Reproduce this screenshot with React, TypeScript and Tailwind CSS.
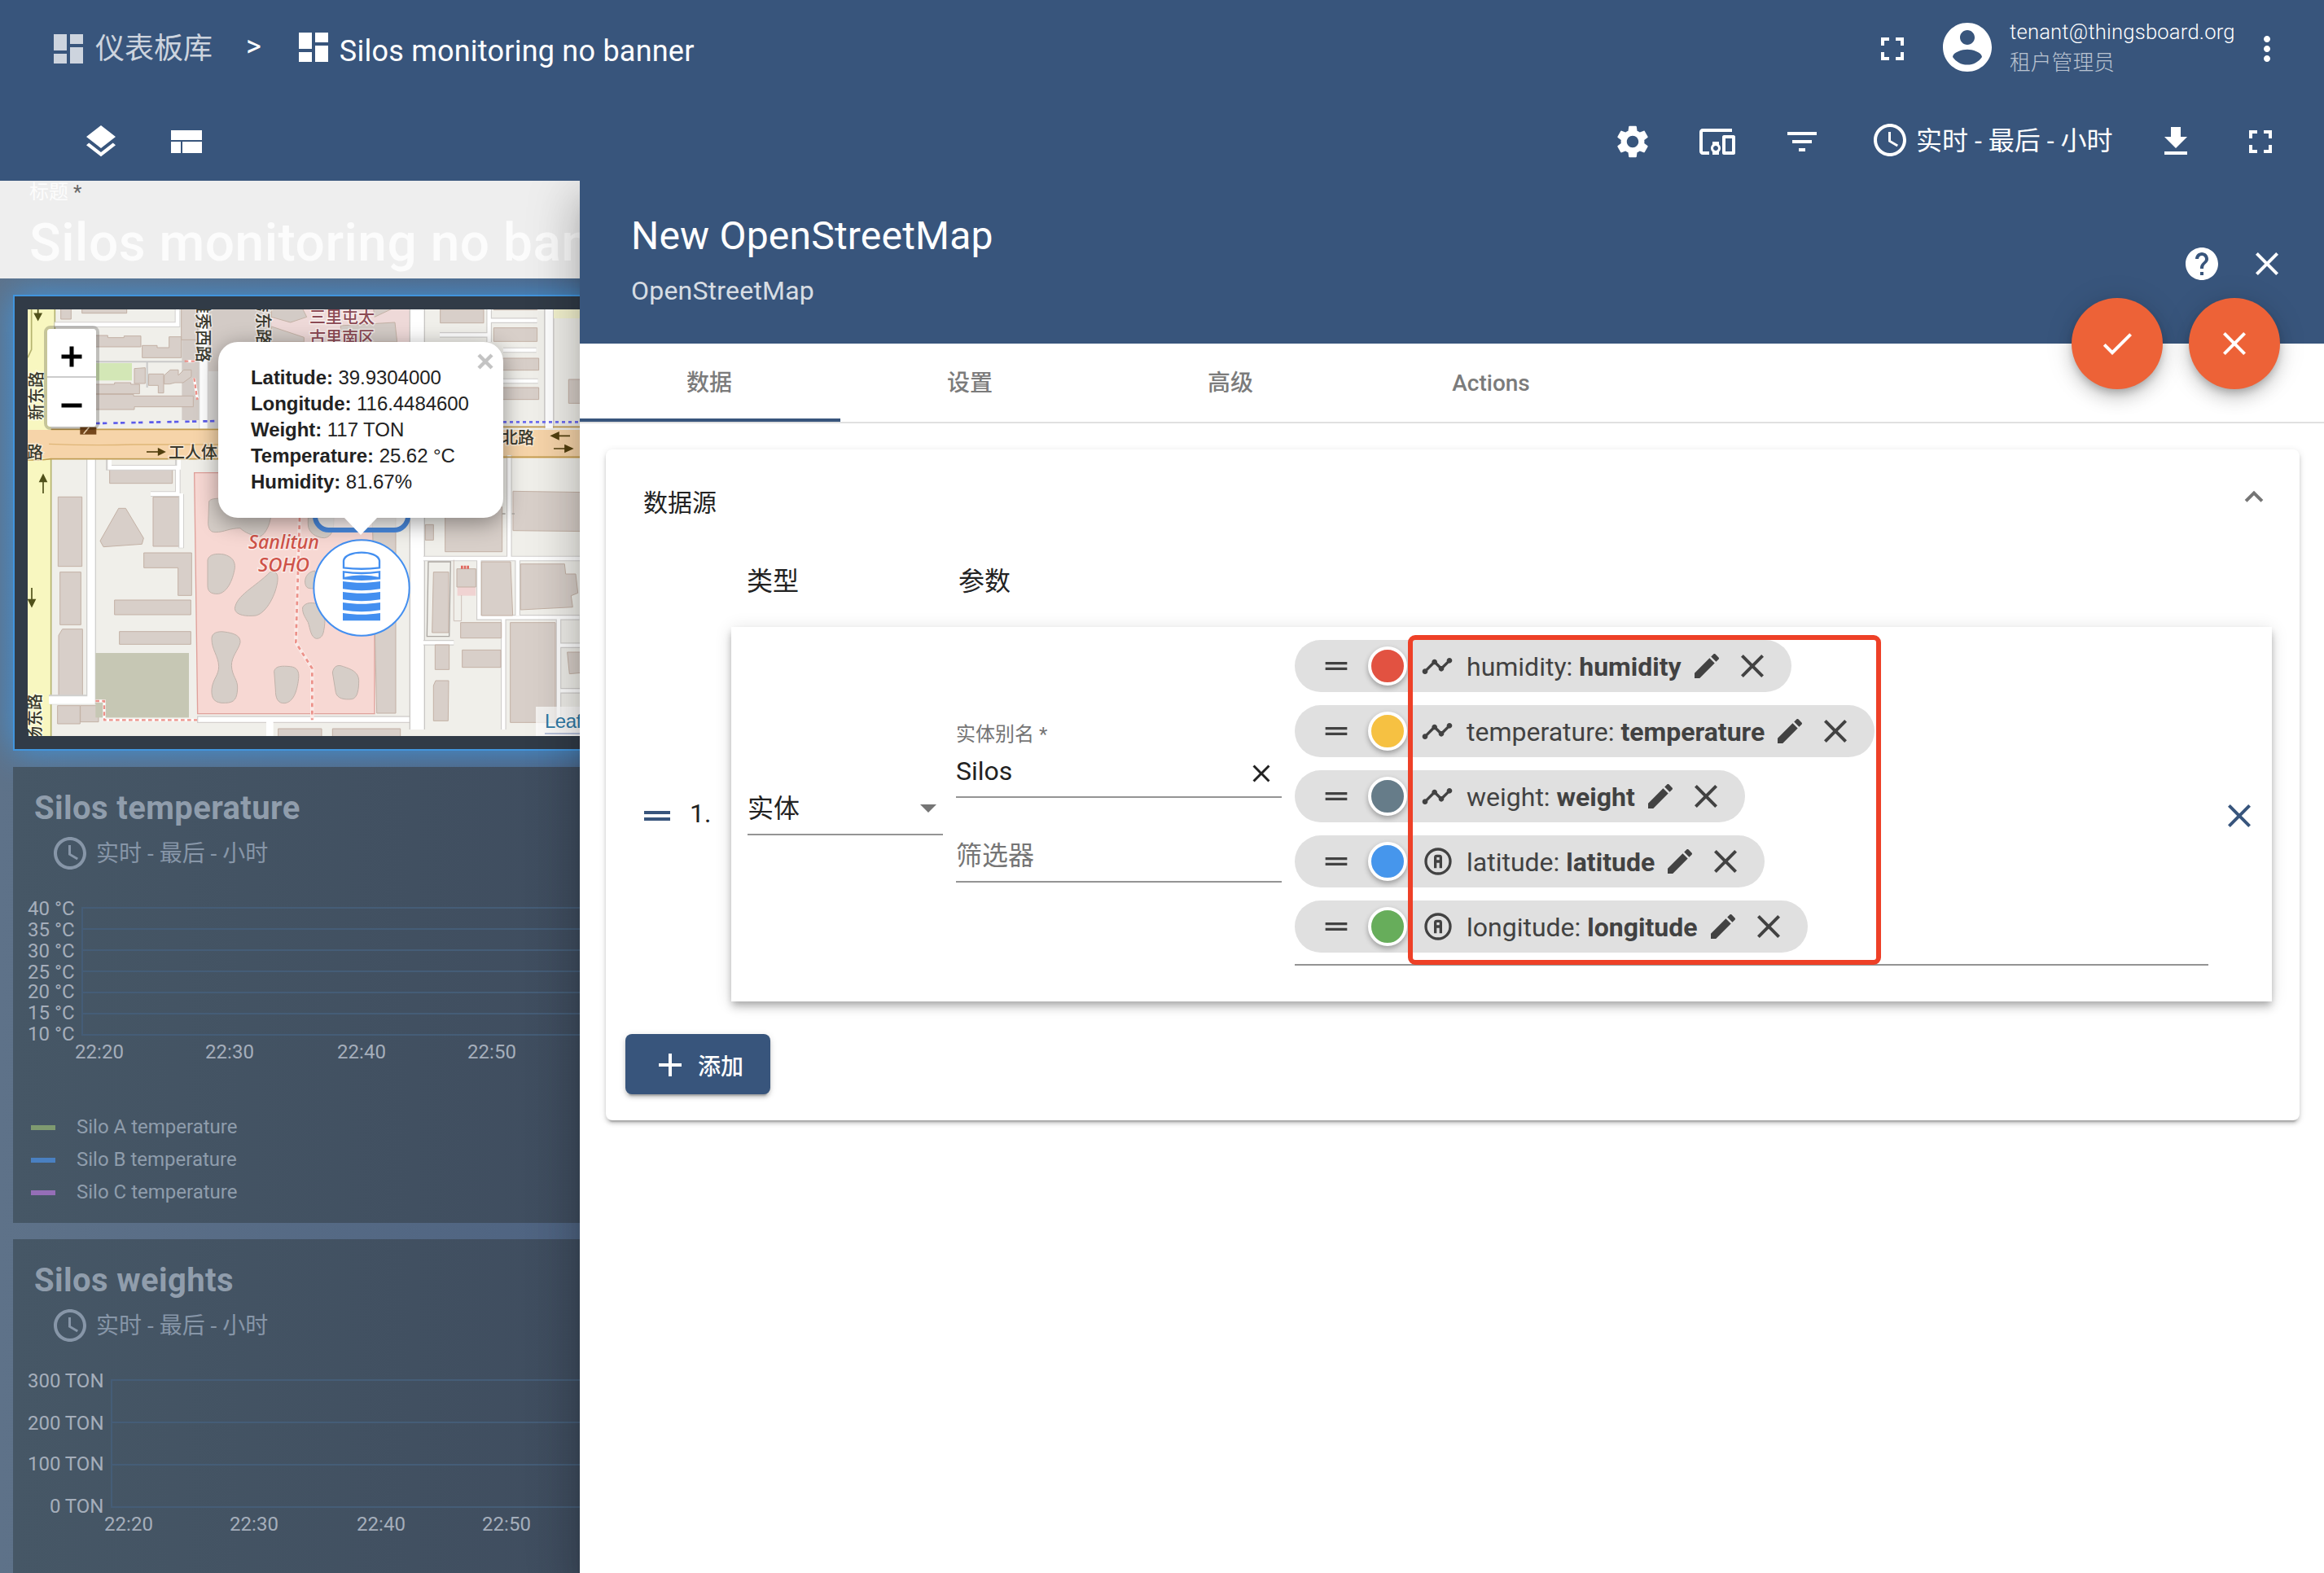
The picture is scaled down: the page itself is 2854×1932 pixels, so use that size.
import React from "react";

type IconProps = { d: string; className?: string };

function Icon({ d, className = "size-12" }: IconProps) {
  return (
    <svg viewBox="0 0 24 24" className={"shrink-0 fill-current " + className}>
      <path d={d} />
    </svg>
  );
}

const P = {
  dashboard: "M3 13h8V3H3v10zm0 8h8v-6H3v6zm10 0h8V11h-8v10zm0-18v6h8V3h-8z",
  fullscreen:
    "M7 14H5v5h5v-2H7v-3zm-2-4h2V7h3V5H5v5zm12 7h-3v2h5v-5h-2v3zM14 5v2h3v3h2V5h-5z",
  account:
    "M12 2C6.48 2 2 6.48 2 12s4.48 10 10 10 10-4.48 10-10S17.52 2 12 2zm0 3c1.66 0 3 1.34 3 3s-1.34 3-3 3-3-1.34-3-3 1.34-3 3-3zm0 14.2c-2.5 0-4.71-1.28-6-3.22.03-1.99 4-3.08 6-3.08 1.99 0 5.97 1.09 6 3.08-1.29 1.94-3.5 3.22-6 3.22z",
  more: "M12 8c1.1 0 2-.9 2-2s-.9-2-2-2-2 .9-2 2 .9 2 2 2zm0 2c-1.1 0-2 .9-2 2s.9 2 2 2 2-.9 2-2-.9-2-2-2zm0 6c-1.1 0-2 .9-2 2s.9 2 2 2 2-.9 2-2-.9-2-2-2z",
  layers:
    "M11.99 18.54l-7.37-5.73L3 14.07l9 7 9-7-1.63-1.27-7.38 5.74zM12 16l7.36-5.73L21 9l-9-7-9 7 1.63 1.27L12 16z",
  compact: "M3 19h6v-7H3v7zm7 0h12v-7H10v7zM3 5v6h19V5H3z",
  settings:
    "M19.14 12.94c.04-.3.06-.61.06-.94 0-.32-.02-.64-.07-.94l2.03-1.58c.18-.14.23-.41.12-.61l-1.92-3.32c-.12-.22-.37-.29-.59-.22l-2.39.96c-.5-.38-1.03-.7-1.62-.94l-.36-2.54c-.04-.24-.24-.41-.48-.41h-3.84c-.24 0-.43.17-.47.41l-.36 2.54c-.59.24-1.13.57-1.62.94l-2.39-.96c-.22-.08-.47 0-.59.22L2.74 8.87c-.12.21-.08.47.12.61l2.03 1.58c-.05.3-.09.63-.09.94s.02.64.07.94l-2.03 1.58c-.18.14-.23.41-.12.61l1.92 3.32c.12.22.37.29.59.22l2.39-.96c.5.38 1.03.7 1.62.94l.36 2.54c.05.24.24.41.48.41h3.84c.24 0 .44-.17.47-.41l.36-2.54c.59-.24 1.13-.56 1.62-.94l2.39.96c.22.08.47 0 .59-.22l1.92-3.32c.12-.22.07-.47-.12-.61l-2.01-1.58zM12 15.6c-1.98 0-3.6-1.62-3.6-3.6s1.62-3.6 3.6-3.6 3.6 1.62 3.6 3.6-1.62 3.6-3.6 3.6z",
  devices:
    "M3 6h18V4H3c-1.1 0-2 .9-2 2v12c0 1.1.9 2 2 2h4v-2H3V6zm10 6H9v1.78c-.61.55-1 1.33-1 2.22s.39 1.67 1 2.22V20h4v-1.78c.61-.55 1-1.34 1-2.22s-.39-1.67-1-2.22V12zm-2 5.5c-.83 0-1.5-.67-1.5-1.5s.67-1.5 1.5-1.5 1.5.67 1.5 1.5-.67 1.5-1.5 1.5zM22 8h-6c-.5 0-1 .5-1 1v10c0 .5.5 1 1 1h6c.5 0 1-.5 1-1V9c0-.5-.5-1-1-1zm-1 10h-4v-8h4v8z",
  filter: "M10 18h4v-2h-4v2zM3 6v2h18V6H3zm3 7h12v-2H6v2z",
  clock:
    "M11.99 2C6.47 2 2 6.48 2 12s4.47 10 9.99 10C17.52 22 22 17.52 22 12S17.52 2 11.99 2zM12 20c-4.42 0-8-3.58-8-8s3.58-8 8-8 8 3.58 8 8-3.58 8-8 8zm.5-13H11v6l5.25 3.15.75-1.23-4.5-2.67z",
  download: "M19 9h-4V3H9v6H5l7 7 7-7zM5 18v2h14v-2H5z",
  help: "M12 2C6.48 2 2 6.48 2 12s4.48 10 10 10 10-4.48 10-10S17.52 2 12 2zm1 17h-2v-2h2v2zm2.07-7.75l-.9.92C13.45 12.9 13 13.5 13 15h-2v-.5c0-1.1.45-2.1 1.17-2.83l1.24-1.26c.37-.36.59-.86.59-1.41 0-1.1-.9-2-2-2s-2 .9-2 2H8c0-2.21 1.79-4 4-4s4 1.79 4 4c0 .88-.36 1.68-.93 2.25z",
  close:
    "M19 6.41L17.59 5 12 10.59 6.41 5 5 6.41 10.59 12 5 17.59 6.41 19 12 13.41 17.59 19 19 17.59 13.41 12z",
  check: "M9 16.17L4.83 12l-1.42 1.41L9 19 21 7l-1.41-1.41z",
  drag: "M20 9H4v2h16V9zM4 15h16v-2H4v2z",
  add: "M19 13h-6v6h-2v-6H5v-2h6V5h2v6h6v2z",
  timeline:
    "M23 8c0 1.1-.9 2-2 2-.18 0-.35-.02-.51-.07l-3.56 3.55c.05.16.07.34.07.52 0 1.1-.9 2-2 2s-2-.9-2-2c0-.18.02-.36.07-.52l-2.55-2.55c-.16.05-.34.07-.52.07s-.36-.02-.52-.07l-4.55 4.56c.05.16.07.33.07.51 0 1.1-.9 2-2 2s-2-.9-2-2 .9-2 2-2c.18 0 .35.02.51.07l4.56-4.55C8.02 9.36 8 9.18 8 9c0-1.1.9-2 2-2s2 .9 2 2c0 .18-.02.36-.07.52l2.55 2.55c.16-.05.34-.07.52-.07s.36.02.52.07l3.55-3.56C19.02 8.35 19 8.18 19 8c0-1.1.9-2 2-2s2 .9 2 2z",
  attribute:
    "M11 7h2a2 2 0 0 1 2 2v8h-2v-4h-2v4H9V9a2 2 0 0 1 2-2m0 2v2h2V9h-2m1 11a8 8 0 0 0 8-8 8 8 0 0 0-8-8 8 8 0 0 0-8 8 8 8 0 0 0 8 8m0 2A10 10 0 0 1 2 12 10 10 0 0 1 12 2a10 10 0 0 1 10 10 10 10 0 0 1-10 10z",
  edit: "M3 17.25V21h3.75L17.81 9.94l-3.75-3.75L3 17.25zM20.71 7.04c.39-.39.39-1.02 0-1.41l-2.34-2.34c-.39-.39-1.02-.39-1.41 0l-1.83 1.83 3.75 3.75 1.83-1.83z",
};

function Header() {
  return (
    <header className="relative z-20 h-[222px] bg-[#38557c] text-white">
      <div className="flex h-[126px] items-center pb-1.5 pl-[60px] pr-[46px]">
        <div className="flex items-center gap-[9px] text-white/75">
          <Icon d={P.dashboard} />
          <span className="text-[36px] leading-none">仪表板库</span>
        </div>
        <span className="mb-1.5 ml-[41px] text-[36px] leading-none">&gt;</span>
        <div className="ml-[40px] flex items-center gap-2">
          <Icon d={P.dashboard} className="mb-1 size-12" />
          <span className="mt-[5px] text-[36px] leading-none tracking-[0.23px]">
            Silos monitoring no banner
          </span>
        </div>
        <div className="ml-auto flex items-center">
          <Icon d={P.fullscreen} />
          <Icon d={P.account} className="mb-1 ml-8 size-[72px]" />
          <div className="mb-1 ml-4 w-[292px] text-[25.6px] font-light leading-[38px] tracking-[0.008em]">
            <div>tenant@thingsboard.org</div>
            <div className="opacity-65">租户管理员</div>
          </div>
          <Icon d={P.more} />
        </div>
      </div>
      <div className="flex h-24 items-center pl-[100px] pr-[54px]">
        <Icon d={P.layers} />
        <Icon d={P.compact} className="ml-14 size-12" />
        <div className="ml-auto flex items-center">
          <Icon d={P.settings} />
          <Icon d={P.devices} className="ml-14 size-12" />
          <Icon d={P.filter} className="ml-14 size-12" />
          <Icon d={P.clock} className="mb-1 ml-[60px] size-12" />
          <span className="mb-0.5 ml-2 w-[295px] text-[32px] leading-none">实时 - 最后 - 小时</span>
          <Icon d={P.download} />
          <Icon d={P.fullscreen} className="ml-14 size-12" />
        </div>
      </div>
    </header>
  );
}

const BUILD = { fill: "#d8cfc9", stroke: "#c3b1a5", strokeWidth: 3 };
const CJK = "'Noto Sans CJK SC', sans-serif";

function MapTiles() {
  return (
    <svg viewBox="0 0 720 524" className="block h-[524px] w-[720px]">
      <rect width="720" height="524" fill="#f0efea" />
      <g transform="scale(0.33333)">
        <g transform="translate(-12 -12)">
          <rect x="580" y="0" width="480" height="420" fill="#d3cbc6" />
          <rect x="678" y="240" width="60" height="210" fill="#dcdad8" />
          <path d="M12 0H112L98 200V1600H12z" fill="#f8f7c0" />
          <path d="M112 0V200M98 560V1600M26 0V160L12 190" stroke="#b5b36f" strokeWidth="5" fill="none" />
          <g {...BUILD}>
            <path d="M134 0h38v48h-38zM212 0h165v26H212zM578 0h60v124h-60z" />
            <path d="M262 108h45v8h60v-6h62v40H262zM434 145h55v8h44v-40h45v77H434zM262 288h70v-6h60v6h32v35H262zM262 325h140v6h220v40H405v10H262z" />
            <path d="M405 230l40-3v58h-40zM458 250h55v70h-20v-28h-36zM515 255l22-20h30v20l20-20h28v25l-30 22h-30l-20 5h-20z" />
            <path d="M314 600h231v53H314zM474 703h96v182h-96zM124 703h88v256h-88zM131 980h77v194h-77zM140 1190h74v248h-88v-225zM122 1472h83v67h-83zM206 1472h67v60h-67z" />
            <path d="M347 745h26l66 110-6 22-142 10-12-22zM440 909h176v157h-50v-102H440zM332 1083h281v54H332zM350 1199h263v47H350z" />
          </g>
          <rect x="262" y="210" width="134" height="64" fill="#d3e7b6" />
          <g fill="none" stroke="#d2d0ce" strokeWidth="20">
            <path d="M112 68H230M230 68H564V0M310 565v30h255v-30M565 600v92h-100M578 692v200" />
          </g>
          <g fill="none" stroke="#fff" strokeWidth="14">
            <path d="M112 68H230M228 68H564V0M314 565v30h255v-32M565 590v102h-100M578 690v200" />
          </g>
          <path d="M262 205H640M452 205v95" stroke="#c9c9c9" strokeWidth="6" fill="none" />
          <path d="M660 0V456" stroke="#d8d8d8" strokeWidth="34" />
          <path d="M660 0V456" stroke="#fff" strokeWidth="28" />
          <path d="M246 565V1450H90" stroke="#d0d0ce" strokeWidth="36" fill="none" />
          <path d="M246 560V1452H90" stroke="#fff" strokeWidth="28" fill="none" />
          <path d="M626 614H1290V1502H638z" fill="#f7d8d3" stroke="#dfa09a" strokeWidth="4" />
          <rect x="262" y="1278" width="344" height="238" fill="#c6c7b4" />
          <path d="M262 1455h32v70H636M598 203h30M625 265l12 75" stroke="#fff" strokeWidth="10" fill="none" />
          <path d="M262 1455h32v70H636M590 203h40M625 265l12 80" stroke="#ec9189" strokeWidth="7" strokeDasharray="14 10" fill="none" />
          <path d="M262 432L720 423" stroke="#5b5bea" strokeWidth="8" strokeDasharray="16 10 16 24" />
          <g fill="#d6cec8" stroke="#c0b2aa" strokeWidth="3">
            <path d="M680 720c5-10 20-12 60-12l170 40c0 50-20 90-40 100-30 0-60-15-75-30-40 0-60 15-90 15-20 0-25-10-28-30z" />
            <path d="M675 935c5-20 30-25 60-20 30 8 42 25 40 50-8 50-30 90-60 95-30 2-40-10-40-30z" />
            <path d="M905 980c20-5 30 5 28 30-5 50-40 120-80 130-35 4-75 0-78-25 5-50 75-80 130-135z" />
            <path d="M690 1225c0-20 20-28 45-25 40 5 62 15 60 40-8 30-32 50-32 85 2 40 24 50 22 85-2 35-10 52-45 52-40 2-52-15-50-50 4-40 26-50 26-85-2-40-26-60-26-102z" />
            <path d="M920 1345c5-20 30-20 60-17 25 3 33 18 30 45-6 50-20 85-50 90-28 2-35-20-35-50z" />
          </g>
          <path d="M636 1523H1420" stroke="#d4d0ce" strokeWidth="26" />
          <path d="M640 1523H1420" stroke="#fff" strokeWidth="18" />
          <path d="M904 1515V1600" stroke="#fff" strokeWidth="26" />
          <path d="M935 1557h160v30H935z" {...BUILD} />
          <path d="M1014 780L1000 1240L1060 1335V1525" stroke="#fbe9e6" strokeWidth="14" fill="none" />
          <path d="M1014 780L1000 1240L1060 1335V1525" stroke="#ec9189" strokeWidth="8" strokeDasharray="14 14" fill="none" />
          <path d="M0 456H2100V560H0z" fill="#f6d4a9" />
          <path d="M98 454H720M0 567H60L98 563H1200" stroke="#c29c4f" strokeWidth="5" fill="none" />
          <path d="M90 508Q250 515 400 510H1200" stroke="#dfb678" strokeWidth="4" fill="none" />
          <path d="M205 446h60v27h-60z" fill="#74471c" />
          <path d="M218 470l20-24" stroke="#e9d0ac" strokeWidth="5" />
          <g stroke="#53400f" strokeWidth="5" fill="#53400f">
            <path d="M450 537h52" />
            <path d="M494 526l22 11-22 11z" />
          </g>
          <g stroke="#50511a" strokeWidth="5" fill="#50511a">
            <path d="M69 690v-45M50 12v16M27 1038v48" />
            <path d="M57 646h24l-12-24zM38 28h24l-12 22zM15 1082h24l-12 24z" />
          </g>
        </g>
        <g transform="translate(1008 -12)">
          <path d="M-110 0H400V132H-110z" fill="#eed9d8" />
          <path d="M-110 0h110l20 40-60 20-70-20zM-110 75l120 40v17h-120zM145 72l200-12 8 72H200l-55-40zM265 0h90l-85 40z" fill="#d3cbc6" stroke="#c3b1a5" strokeWidth="3" />
          <path d="M427 0V1560" stroke="#c9c7c4" strokeWidth="58" />
          <path d="M427 0V1560" stroke="#fff" strokeWidth="50" />
          <path d="M262 780h86v720h-70z" fill="#d8cfc9" stroke="#c3b1a5" strokeWidth="3" />
          <g fill="#d6cec8" stroke="#c0b2aa" strokeWidth="3">
            <path d="M25 780h95c0 40-5 70-35 74-30 0-60-20-60-50zM50 975c-30 5-40 30-35 50s20 15 50 15zM5 1110c10-20 40-20 60-10 25 20 25 60 18 95-4 25-15 30-28 30-20-5-22-35-30-60-12-20-22-35-20-55z" />
            <path d="M115 1350c5-25 20-30 40-22 30 10 55 20 57 50 0 30-3 65-25 70-30 3-55-2-60-25z" />
          </g>
          <g fill="none" stroke="#d0cecc" strokeWidth="20">
            <path d="M692 0v132M697 53h172M510 106h185M744 162h122M744 276h128M766 550v375M450 930H1030M655 935v212h370M797 935v205M745 1150v410M450 1240h112M948 1145v410M950 1250h90M955 1417h90" />
            <path d="M913 0V450" strokeWidth="38" />
          </g>
          <g fill="none" stroke="#fff" strokeWidth="13">
            <path d="M692 0v132M697 53h172M510 106h185M744 162h122M744 276h128M766 550v375M450 930H1030M655 935v212h370M797 935v205M745 1150v410M450 1240h112M948 1145v410M950 1250h90M955 1417h90" />
            <path d="M913 0V450" strokeWidth="28" />
          </g>
          <path d="M930 0h120v45h-120z" fill="#f4f3cf" />
          <path d="M575 1035h68v32h-68z" fill="#f0d3d2" />
          <path d="M562 935v225h28v-95" fill="none" stroke="#cdbfb8" strokeWidth="3" />
          <path d="M468 942h82l-5 275h-82z" fill="none" stroke="#aaa6a1" strokeWidth="4" />
          <g {...BUILD}>
            <path d="M512 12h160v50H512zM709 80h160v50H709zM740 192h135v44H740zM740 300h135v44H740zM985 270h60v88h-60zM709 0h160v14H709z" />
            <path d="M530 740h210v165H530zM780 682l265 4v144l-265-3zM457 805h30v57h-30zM487 980h56v223h-61z" />
            <path d="M573 968h70v67h-70zM664 942h107l8 198H664zM808 950h162l4 37h37l8 70-25 10 6 42-192 10zM587 1166h150v57H587zM593 1267h142v64H593zM493 1248h52v91h-52zM495 1380h48l-2 148h-54v-130zM770 1166h166v368H770zM980 1275h60v75l-52 5z" />
            <path d="M115 1557h250v30H115z" />
          </g>
          <path d="M588 962h32" stroke="#e0675e" strokeWidth="12" strokeDasharray="8 3" />
          <path d="M740 765h12M776 765h10" stroke="#aaa6a1" strokeWidth="4" />
          <path d="M720 445H1040M720 556H1040" stroke="#c29c4f" strokeWidth="5" />
          <path d="M899 436h28v14h-28z" fill="#fff" />
          <path d="M744 427H1030" stroke="#6d6df0" strokeWidth="8" strokeDasharray="12 12" />
          <g stroke="#53400f" strokeWidth="5" fill="#53400f">
            <path d="M990 478h-48M930 525h48" />
            <path d="M948 466l-26 12 26 12zM972 513l26 12-26 12z" />
          </g>
        </g>
      </g>
      <g
        fontFamily={CJK}
        fontSize="20"
        fontWeight="500"
        fill="#3a3a2e"
        stroke="#fff"
        strokeWidth="3"
        paintOrder="stroke"
        strokeOpacity="0.5"
      >
        <text transform="translate(18 136) rotate(-90)">新东路</text>
        <text transform="translate(16 532) rotate(-90)">场东路</text>
        <text transform="translate(208 -15) rotate(90)">雅秀西路</text>
        <text transform="translate(282 -16) rotate(90)">秀东路</text>
        <text x="-1" y="183">路</text>
        <text x="173" y="183">工人体</text>
        <text x="582" y="165">北路</text>
        <g fill="#8c4a54">
          <text x="346" y="17">三里屯太</text>
          <text x="346" y="42">古里南区</text>
        </g>
      </g>
      <g
        fontFamily="'Noto Sans'"
        fontStyle="italic"
        fontWeight="500"
        fontSize="23"
        fill="#cf5248"
        stroke="#fff"
        strokeWidth="3"
        strokeOpacity="0.45"
        paintOrder="stroke"
      >
        <text x="271" y="293.500" textLength="87" lengthAdjust="spacingAndGlyphs">Sanlitun</text>
        <text x="283" y="321.500" textLength="63" lengthAdjust="spacingAndGlyphs">SOHO</text>
      </g>
    </svg>
  );
}

function SiloMarker() {
  return (
    <svg viewBox="0 0 360 360" className="size-[120px]">
      <circle cx="180" cy="180" r="176" fill="#fff" stroke="#438ff0" strokeWidth="6" />
      <g fill="#fff" stroke="#438ff0" strokeWidth="7">
        <path d="M114 106V80C120 40 240 40 246 80V106C200 112 160 112 114 106z" />
        <path d="M114 121C160 128 200 128 246 121V145H114z" />
      </g>
      <g fill="#438ff0">
        <path d="M111 143C150 130 210 130 249 143V147C200 155 160 155 111 147z" />
        <path d="M111 156C160 163 200 163 249 156V184C200 192 160 192 111 184z" />
        <path d="M111 195C160 202 200 202 249 195V223C200 231 160 231 111 223z" />
        <path d="M111 234C160 241 200 241 249 234V262C200 270 160 270 111 262z" />
        <path d="M111 273C160 280 200 280 249 273V301H111z" />
      </g>
    </svg>
  );
}

const POPUP = [
  ["Latitude:", "39.9304000"],
  ["Longitude:", "116.4484600"],
  ["Weight:", "117 TON"],
  ["Temperature:", "25.62 °C"],
  ["Humidity:", "81.67%"],
];

function MapWidget() {
  return (
    <div className="h-[560px] w-[760px] shrink-0 border-2 border-[#4195dd] bg-[#313b47] p-4 shadow-[0_0_40px_#4195dd]">
      <div className="relative h-[524px] w-[720px] overflow-hidden font-['Liberation_Sans',sans-serif]">
        <MapTiles />
        <div className="absolute left-[350px] top-[200px] h-[74px] w-[120px] rounded-[20px] border-[6px] border-[#4888dc] bg-white/70" />
        <div className="absolute left-[350px] top-[282px]">
          <SiloMarker />
        </div>
        <div className="absolute left-[234px] top-10 h-[216px] w-[350px] rounded-3xl bg-white shadow-[0_6px_28px_rgba(0,0,0,0.4)]">
          <div className="pl-10 pt-7 text-[24px] leading-8 tracking-[-0.05px] text-[#222]">
            {POPUP.map(([k, v]) => (
              <div key={k}>
                <b>{k}</b> {v}
              </div>
            ))}
          </div>
          <svg viewBox="0 0 20 20" className="absolute right-3 top-[14px] size-5">
            <path d="M2 2L18 18M18 2L2 18" stroke="#c3c3c3" strokeWidth="4.500" />
          </svg>
          <svg viewBox="0 0 42 22" className="absolute left-[154px] top-[215px] h-[22px] w-[42px]">
            <path d="M0 0H42L21 22z" fill="#fff" />
          </svg>
        </div>
        <div className="absolute left-5 top-5 w-[68px] rounded-lg border-4 border-black/20 bg-clip-padding">
          <div className="flex h-[60px] items-center justify-center rounded-t border-b-2 border-[#ccc] bg-white">
            <svg viewBox="0 0 26 26" className="mt-[10px] size-[26px]">
              <path d="M13 0.500V25.500M0.500 13H25.500" stroke="#000" strokeWidth="5" />
            </svg>
          </div>
          <div className="flex h-[60px] items-center justify-center rounded-b bg-white">
            <svg viewBox="0 0 26 26" className="mt-2 size-[26px]">
              <path d="M0.500 13H25.500" stroke="#000" strokeWidth="5" />
            </svg>
          </div>
        </div>
        <div className="absolute bottom-0 left-[624px] h-9 w-24 bg-white/70 pl-[11px] pt-1">
          <div className="border-b-2 border-[#b9c3dc] text-[24px] leading-7 tracking-[-0.5px] text-[#2f7aa6]">
            Leaflet
          </div>
        </div>
      </div>
    </div>
  );
}

type ChartProps = {
  title: string;
  left: number;
  yLabels: { text: string; y: number }[];
  lines: number[];
  xs: number[];
  xLabelY: number;
  children?: React.ReactNode;
  className: string;
};

const TIMES = ["22:20", "22:30", "22:40", "22:50"];

function ChartWidget({ title, left, yLabels, lines, xs, xLabelY, children, className }: ChartProps) {
  return (
    <div className={"shrink-0 bg-linear-to-r from-[#465766] to-[#3f4d5f] text-[#909dac] " + className}>
      <div className="pl-[26px] pt-[27px] text-[40px] font-bold leading-[48px] tracking-[0.4px]">
        {title}
      </div>
      <div className="mt-[7px] flex h-12 items-center gap-2 pl-[46px] text-[#8796a8]">
        <Icon d={P.clock} />
        <span className="mt-0.5 text-[28px] leading-none">实时 - 最后 - 小时</span>
      </div>
      <svg viewBox="0 130 696 240" className="block h-[240px] w-[696px]">
        <g stroke="#455d77" strokeWidth="2">
          {lines.map((y) => (
            <path key={y} d={`M${left} ${y}H696`} />
          ))}
          <path d={`M${left + 1} ${lines[0]}V${lines[lines.length - 1]}`} />
        </g>
        <g fill="#a5aebb" fontSize="24">
          {yLabels.map((l) => (
            <text key={l.text} x={left - 8.5} y={l.y + 7.5} textAnchor="end">
              {l.text}
            </text>
          ))}
          {TIMES.map((t, i) => (
            <text key={t} x={xs[i]} y={xLabelY + 7.5} textAnchor="middle">
              {t}
            </text>
          ))}
        </g>
      </svg>
      {children}
    </div>
  );
}

const LEGEND = [
  { name: "Silo A temperature", color: "bg-[#7f9a70]" },
  { name: "Silo B temperature", color: "bg-[#4a80c1]" },
  { name: "Silo C temperature", color: "bg-[#956eb7]" },
];

function Dashboard() {
  return (
    <section className="flex h-[1710px] w-[712px] shrink-0 flex-col overflow-hidden bg-linear-to-r from-[#5e7289] to-[#4e6381]">
      <div className="relative z-[1] h-[120px] shrink-0 whitespace-nowrap bg-[#eeeeee] pl-9 font-medium text-[#fcfcfc]">
        <div className="pt-px text-[24px] font-normal leading-[26px]">
          标题 <span className="text-[#666]">*</span>
        </div>
        <div className="pt-[14px] text-[64px] leading-[72px] tracking-[0.5px]">
          Silos monitoring no banner
        </div>
      </div>
      <div className="flex flex-col gap-5 pl-4 pt-5">
        <MapWidget />
        <ChartWidget
          className="relative h-[560px]"
          title="Silos temperature"
          left={84}
          yLabels={[40, 35, 30, 25, 20, 15, 10].map((v, i) => ({
            text: v + " °C",
            y: [174, 200, 226, 252, 276, 302, 328][i],
          }))}
          lines={[173, 199, 225, 251, 277, 303, 329]}
          xs={[106, 266, 428, 588]}
          xLabelY={350}
        >
          <div className="flex flex-col pl-[22px] pt-[53px]">
            {LEGEND.map((l) => (
              <div key={l.name} className="flex h-10 items-center">
                <span className={"h-1.5 w-[30px] " + l.color} />
                <span className="mb-0.5 ml-[26px] text-[24px] leading-none text-[#8f9dac]">
                  {l.name}
                </span>
              </div>
            ))}
          </div>
        </ChartWidget>
        <ChartWidget
          className="h-[420px]"
          title="Silos weights"
          left={120}
          yLabels={[
            { text: "300 TON", y: 174 },
            { text: "200 TON", y: 226 },
            { text: "100 TON", y: 276 },
            { text: "0 TON", y: 328 },
          ]}
          lines={[173, 225, 277, 329]}
          xs={[142, 296, 452, 606]}
          xLabelY={350}
        />
      </div>
    </section>
  );
}

const CHIPS = [
  { name: "humidity", color: "bg-[#e25241]", ts: true },
  { name: "temperature", color: "bg-[#f6c142]", ts: true },
  { name: "weight", color: "bg-[#667c89]", ts: true },
  { name: "latitude", color: "bg-[#4696ec]", ts: false },
  { name: "longitude", color: "bg-[#67ad5b]", ts: false },
];

function Chip({ name, color, ts }: { name: string; color: string; ts: boolean }) {
  return (
    <div className="flex h-16 w-fit items-center rounded-full bg-[#e0e0e0] pl-[31px] pr-6 text-[#424242]">
      <Icon d={P.drag} className="size-10" />
      <span
        className={
          "ml-[19px] size-12 rounded-full border-4 border-white shadow-[0_3px_6px_rgba(0,0,0,0.3)] " + color
        }
      />
      <Icon
        d={ts ? P.timeline : P.attribute}
        className={ts ? "ml-[17px] mr-px size-10" : "ml-[18px] size-10"}
      />
      <span className="ml-[15px] mt-px text-[32px] leading-none">
        {name}: <b className="font-bold">{name}</b>
      </span>
      <Icon d={P.edit} className="ml-[11px] size-10" />
      <Icon d={P.close} className="ml-3 size-12" />
    </div>
  );
}

function DatasourceCard() {
  return (
    <div className="mx-8 mr-[30px] mt-8 h-[824px] rounded-lg bg-white text-[#222] shadow-[0_6px_2px_-4px_rgba(0,0,0,0.2),0_4px_4px_rgba(0,0,0,0.14),0_2px_10px_rgba(0,0,0,0.12)]">
      <div className="flex h-32 items-center justify-between pl-[46px] pr-12 text-[30px] leading-none">
        <span className="mt-1">数据源</span>
        <span className="mb-1 size-4 rotate-[225deg] border-b-4 border-r-4 border-black/54" />
      </div>
      <div className="flex h-[66px] items-center pl-[173px] pt-0.5 text-[32px] leading-none">
        <span className="w-[260px]">类型</span>
        <span>参数</span>
      </div>
      <div className="mt-6 flex h-[460px] pr-[34px]">
        <div className="flex w-[154px] shrink-0 items-center pl-[39px]">
          <Icon d={P.drag} className="mt-1 size-12 text-[#38557c]" />
          <span className="mb-0.5 ml-4 text-[32px] leading-none">1.</span>
        </div>
        <div className="flex flex-1 pl-5 shadow-[0_4px_8px_-2px_rgba(0,0,0,0.2),0_8px_10px_rgba(0,0,0,0.14),0_2px_20px_rgba(0,0,0,0.12)]">
          <div className="mt-[198px] flex h-[58px] w-60 items-center justify-between border-b-2 border-[#949494] pb-1.5 pr-2">
            <span className="text-[32px] leading-none">实体</span>
            <span className="border-x-[10px] border-t-[10px] border-x-transparent border-t-[#757575]" />
          </div>
          <div className="ml-4 mt-[120px] w-[400px]">
            <div className="text-[24px] leading-6 text-[#757575]">实体别名 *</div>
            <div className="flex h-[66px] items-center justify-between border-b-2 border-[#949494] pr-[7px] pt-0.5">
              <span className="text-[32px] leading-none">Silos</span>
              <Icon d={P.close} className="mt-1.5 size-9" />
            </div>
            <div className="flex h-[104px] items-center border-b-2 border-[#949494] pb-[2px] pt-[42px] text-[32px] leading-none text-[#757575]">
              筛选器
            </div>
          </div>
          <div className="relative ml-4 flex h-[416px] w-[1122px] flex-col gap-4 border-b-2 border-[#949494] pt-4">
            {CHIPS.map((c) => (
              <Chip key={c.name} {...c} />
            ))}
            <div className="absolute left-[139px] top-[10px] h-[405px] w-[581px] rounded-[9px] border-[6px] border-[#ee4027]" />
          </div>
          <Icon d={P.close} className="ml-[14px] mt-[208px] size-12 text-[#38557c]" />
        </div>
      </div>
      <button className="ml-6 mt-10 flex h-[74px] w-[178px] items-center rounded-lg bg-[#38557c] pl-[31px] text-[28px] font-medium leading-none text-white shadow-[0_6px_2px_-4px_rgba(0,0,0,0.2),0_4px_4px_rgba(0,0,0,0.14),0_2px_10px_rgba(0,0,0,0.12)]">
        <Icon d={P.add} className="mt-0.5 size-12" />
        <span className="ml-[10px] mt-[7px]">添加</span>
      </button>
    </div>
  );
}

const FAB =
  "flex size-28 items-center justify-center rounded-full bg-[#ed6237] text-white shadow-[0_6px_10px_-2px_rgba(0,0,0,0.2),0_12px_20px_rgba(0,0,0,0.14),0_2px_36px_rgba(0,0,0,0.12)]";

function WidgetPanel() {
  return (
    <main className="relative z-10 h-[1710px] flex-1 bg-white shadow-[0_16px_20px_-10px_rgba(0,0,0,0.2),0_32px_48px_4px_rgba(0,0,0,0.14),0_12px_60px_10px_rgba(0,0,0,0.12)]">
      <div className="relative flex h-[200px] justify-between bg-[#38557c] pl-[63px] pr-[46px] text-white">
        <div className="pt-10">
          <div className="text-[48px] leading-[56px] tracking-[0.2px]">New OpenStreetMap</div>
          <div className="mt-[19px] text-[32px] leading-10 tracking-[0.2px] opacity-80">OpenStreetMap</div>
        </div>
        <div className="flex gap-8 pt-[78px]">
          <Icon d={P.help} />
          <Icon d={P.close} />
        </div>
        <div className="absolute right-[54px] top-36 z-10 flex gap-8">
          <button className={FAB}>
            <Icon d={P.check} />
          </button>
          <button className={FAB}>
            <Icon d={P.close} />
          </button>
        </div>
      </div>
      <nav className="flex h-[98px] border-b-2 border-[#e0e0e0] text-[28px] font-medium leading-none text-[#7b7b7b]">
        {["数据", "设置", "高级", "Actions"].map((t, i) => (
          <div
            key={t}
            className={
              "flex w-80 items-center justify-center border-b-4 pr-0.5 pt-1.5 " +
              (i === 0 ? "border-[#38557c]" : "border-transparent")
            }
          >
            {t}
          </div>
        ))}
      </nav>
      <DatasourceCard />
    </main>
  );
}

export default function App() {
  return (
    <div className="h-[1932px] w-[2854px] overflow-hidden bg-white font-['Roboto','Noto_Sans_CJK_SC',sans-serif]">
      <Header />
      <div className="flex">
        <Dashboard />
        <WidgetPanel />
      </div>
    </div>
  );
}
